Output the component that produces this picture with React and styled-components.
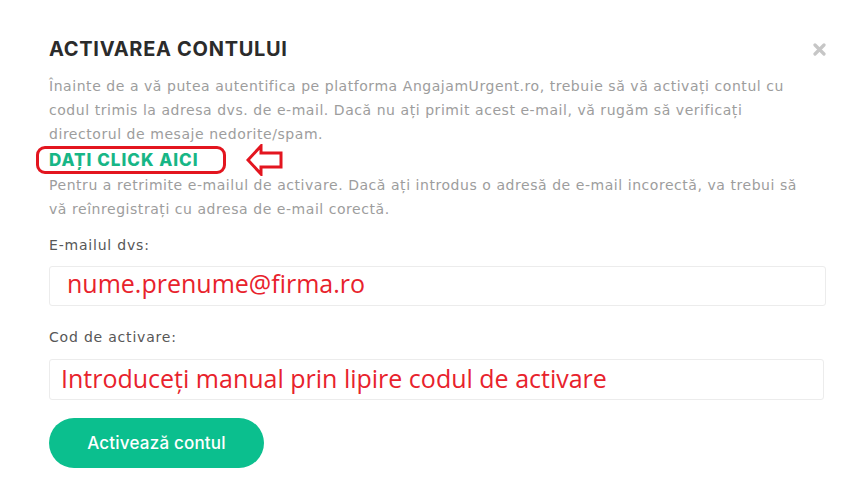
import React from 'react'
import styled, { createGlobalStyle } from 'styled-components'

const GlobalStyle = createGlobalStyle`
  body {
    margin: 0;
    background: #fff;
    font-family: 'DejaVu Sans', 'Noto Sans', sans-serif;
  }
`

const Modal = styled.div`
  width: 850px;
  height: 493px;
  box-sizing: border-box;
  padding: 37px 24px 0 49px;
  background: #fff;
  display: flex;
  flex-direction: column;
  align-items: flex-start;
`

const Header = styled.div`
  align-self: stretch;
  display: flex;
  align-items: center;
  justify-content: space-between;
  height: 24px;
`

const Title = styled.h2`
  margin: 0;
  font-family: 'Inter', 'Noto Sans', sans-serif;
  font-size: 20px;
  font-weight: 700;
  letter-spacing: 0.7px;
  color: #2b2b2b;
`

const CloseButton = styled.button`
  border: none;
  background: none;
  padding: 0;
  width: 14px;
  height: 14px;
  display: flex;
  align-items: center;
  justify-content: center;
  cursor: pointer;
`

const Text = styled.p`
  margin: ${p => p.$top || 0}px 0 0;
  font-size: 14px;
  line-height: 24px;
  letter-spacing: 0.55px;
  color: #9d9d9d;
  white-space: nowrap;
`

const ClickRow = styled.div`
  display: flex;
  align-items: center;
  margin-left: -13px;
  height: 27px;
`

const ClickBox = styled.a`
  display: inline-flex;
  align-items: center;
  box-sizing: border-box;
  width: 190px;
  height: 28px;
  padding-left: 10px;
  border: 3px solid #e3151f;
  border-radius: 9px;
  font-family: 'Inter', 'Noto Sans', sans-serif;
  font-size: 17px;
  font-weight: 800;
  letter-spacing: 1px;
  color: #17b686;
  text-decoration: none;
`

const Arrow = styled.svg`
  margin-left: 20px;
`

const Label = styled.div`
  margin-top: ${p => p.$top}px;
  font-size: 14px;
  line-height: 20px;
  letter-spacing: 0.8px;
  color: #575757;
`

const Field = styled.div`
  margin-top: ${p => p.$top}px;
  height: ${p => p.$height}px;
  width: ${p => p.$width}px;
  box-sizing: border-box;
  border: 1px solid #ececec;
  border-radius: 3px;
  display: flex;
  align-items: center;
  padding: 0 0 ${p => p.$lift}px ${p => p.$pad}px;
`

const Note = styled.span`
  font-family: 'Open Sans', 'Noto Sans', sans-serif;
  font-size: 25px;
  color: #e8222c;
  background: #fff;
  line-height: 1.1;
  white-space: nowrap;
`

const SubmitButton = styled.button`
  margin-top: 18px;
  width: 215px;
  height: 50px;
  border: none;
  border-radius: 25px;
  background: #0bbf8e;
  color: #fff;
  font-family: 'Inter', 'Noto Sans', sans-serif;
  font-size: 17px;
  font-weight: 500;
  letter-spacing: 0.2px;
  cursor: pointer;
`

export default function App() {
  return (
    <>
      <GlobalStyle />
      <Modal>
        <Header>
          <Title>ACTIVAREA CONTULUI</Title>
          <CloseButton aria-label="close">
            <svg width="13" height="13" viewBox="0 0 13 13">
              <path d="M2 2 L11 11 M11 2 L2 11" stroke="#c6c6c6" strokeWidth="3.2" strokeLinecap="round" />
            </svg>
          </CloseButton>
        </Header>
        <Text $top={13}>
          Înainte de a vă putea autentifica pe platforma AngajamUrgent.ro, trebuie să vă activați contul cu
          <br />
          codul trimis la adresa dvs. de e-mail. Dacă nu ați primit acest e-mail, vă rugăm să verificați
          <br />
          directorul de mesaje nedorite/spam.
        </Text>
        <ClickRow>
          <ClickBox href="#">DAȚI CLICK AICI</ClickBox>
          <Arrow width="38" height="32" viewBox="0 0 38 32">
            <path
              d="M2 16 L15 2 L15 9 L35 9 L35 23 L15 23 L15 30 Z"
              fill="#fff"
              stroke="#e3151f"
              strokeWidth="3"
              strokeLinejoin="miter"
            />
          </Arrow>
        </ClickRow>
        <Text>
          Pentru a retrimite e-mailul de activare. Dacă ați introdus o adresă de e-mail incorectă, va trebui să
          <br />
          vă reînregistrați cu adresa de e-mail corectă.
        </Text>
        <Label $top={14}>E-mailul dvs:</Label>
        <Field $top={11} $height={40} $width={777} $pad={17} $lift={4}>
          <Note>nume.prenume@firma.ro</Note>
        </Field>
        <Label $top={21}>Cod de activare:</Label>
        <Field $top={12} $height={41} $width={775} $pad={11} $lift={1}>
          <Note>Introduceți manual prin lipire codul de activare</Note>
        </Field>
        <SubmitButton>Activează contul</SubmitButton>
      </Modal>
    </>
  )
}
